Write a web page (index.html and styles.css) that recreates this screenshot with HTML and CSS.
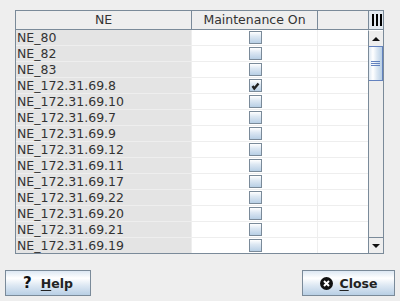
FILE: index.html
```html
<!DOCTYPE html>
<html>
<head>
<meta charset="utf-8">
<link rel="stylesheet" href="styles.css">
</head>
<body>
<div class="pane">
  <div class="table">
    <div class="thead">
      <div class="th c1">NE</div>
      <div class="th c2">Maintenance On</div>
      <div class="th c3"></div>
    </div>
    <div class="tbody">
      <div class="tr"><div class="td c1">NE_80</div><div class="td c2"><span class="cb"></span></div><div class="td c3"></div></div>
      <div class="tr"><div class="td c1">NE_82</div><div class="td c2"><span class="cb"></span></div><div class="td c3"></div></div>
      <div class="tr"><div class="td c1">NE_83</div><div class="td c2"><span class="cb"></span></div><div class="td c3"></div></div>
      <div class="tr"><div class="td c1">NE_172.31.69.8</div><div class="td c2"><span class="cb"><svg width="11" height="11" viewBox="0 0 11 11"><path d="M2.5 6 L4.3 8.5 L8.5 3.5" fill="none" stroke="#222" stroke-width="2.4"/></svg></span></div><div class="td c3"></div></div>
      <div class="tr"><div class="td c1">NE_172.31.69.10</div><div class="td c2"><span class="cb"></span></div><div class="td c3"></div></div>
      <div class="tr"><div class="td c1">NE_172.31.69.7</div><div class="td c2"><span class="cb"></span></div><div class="td c3"></div></div>
      <div class="tr"><div class="td c1">NE_172.31.69.9</div><div class="td c2"><span class="cb"></span></div><div class="td c3"></div></div>
      <div class="tr"><div class="td c1">NE_172.31.69.12</div><div class="td c2"><span class="cb"></span></div><div class="td c3"></div></div>
      <div class="tr"><div class="td c1">NE_172.31.69.11</div><div class="td c2"><span class="cb"></span></div><div class="td c3"></div></div>
      <div class="tr"><div class="td c1">NE_172.31.69.17</div><div class="td c2"><span class="cb"></span></div><div class="td c3"></div></div>
      <div class="tr"><div class="td c1">NE_172.31.69.22</div><div class="td c2"><span class="cb"></span></div><div class="td c3"></div></div>
      <div class="tr"><div class="td c1">NE_172.31.69.20</div><div class="td c2"><span class="cb"></span></div><div class="td c3"></div></div>
      <div class="tr"><div class="td c1">NE_172.31.69.21</div><div class="td c2"><span class="cb"></span></div><div class="td c3"></div></div>
      <div class="tr"><div class="td c1">NE_172.31.69.19</div><div class="td c2"><span class="cb"></span></div><div class="td c3"></div></div>
    </div>
  </div>
  <div class="vscroll">
    <div class="corner"><span class="bar"></span><span class="bar"></span><span class="bar"></span></div>
    <div class="sbtn up"><span class="tri-up"></span></div>
    <div class="track">
      <div class="thumb"><span class="grip"></span><span class="grip"></span><span class="grip"></span></div>
    </div>
    <div class="sbtn down"><span class="tri-down"></span></div>
  </div>
</div>
<div class="buttons">
  <button class="btn help"><span class="qicon">?</span><span class="lbl"><u>H</u>elp</span></button>
  <button class="btn close"><svg class="xicon" width="13" height="13" viewBox="0 0 13 13"><circle cx="6.5" cy="6.5" r="6.5" fill="#111"/><path d="M4 4 L9 9 M9 4 L4 9" stroke="#fff" stroke-width="2"/></svg><span class="lbl"><u>C</u>lose</span></button>
</div>
</body>
</html>
```
FILE: styles.css
```css
html, body {
  margin: 0;
  padding: 0;
  background: #eeeeee;
  font-family: "DejaVu Sans", sans-serif;
  font-size: 12.5px;
  color: #333333;
}
.pane {
  margin: 10px 0 0 15px;
  width: 369px;
  height: 244px;
  box-sizing: border-box;
  border: 1px solid #7a8a99;
  display: flex;
  background: #ffffff;
}
.table {
  width: 352px;
  display: flex;
  flex-direction: column;
}
.thead {
  display: flex;
  height: 19px;
  box-sizing: border-box;
  border-bottom: 1px solid #7a8a99;
  background: #eeeeee;
}
.th {
  box-sizing: border-box;
  text-align: center;
  line-height: 18px;
  border-right: 1px solid #7a8a99;
}
.th.c3 { border-right: none; }
.c1 { width: 176px; }
.c2 { width: 126px; }
.c3 { width: 50px; }
.tbody {
  flex: 1;
  overflow: hidden;
}
.tr {
  display: flex;
  height: 16px;
}
.td {
  box-sizing: border-box;
  height: 16px;
  border-right: 1px solid #eeeeee;
  border-bottom: 1px solid #eeeeee;
  line-height: 15px;
  white-space: nowrap;
}
.td.c1 {
  background: #e4e4e4;
  border-color: #eeeeee;
  padding-left: 1px;
}
.td.c2 {
  display: flex;
  justify-content: center;
  align-items: center;
}
.td.c3 { border-right: none; }
.cb {
  width: 13px;
  height: 13px;
  box-sizing: border-box;
  border: 1px solid #7a8a99;
  background: linear-gradient(#ffffff 0%, #dde8f3 40%, #b8cfe5 100%);
  display: flex;
  align-items: center;
  justify-content: center;
  margin-left: 1px;
}
.vscroll {
  width: 15px;
  display: flex;
  flex-direction: column;
  background: #eeeeee;
}
.corner {
  height: 19px;
  box-sizing: border-box;
  border-left: 1px solid #7a8a99;
  border-bottom: 1px solid #7a8a99;
  background: #e2e9f0;
  display: flex;
  justify-content: center;
  align-items: center;
  gap: 2px;
  padding-left: 1px;
}
.bar {
  width: 2px;
  height: 12px;
  background: #000000;
}
.sbtn {
  height: 16px;
  box-sizing: border-box;
  border-left: 1px solid #7a8a99;
  background: #eeeeee;
  display: flex;
  align-items: center;
  justify-content: center;
  border-top: 1px solid #ffffff;
}
.sbtn.down {
  border-top: 1px solid #7a8a99;
}
.tri-up {
  width: 0; height: 0;
  border-left: 4px solid transparent;
  border-right: 4px solid transparent;
  border-bottom: 4px solid #111;
}
.tri-down {
  width: 0; height: 0;
  border-left: 4px solid transparent;
  border-right: 4px solid transparent;
  border-top: 4px solid #111;
}
.track {
  flex: 1;
  border-left: 1px solid #7a8a99;
  background: #eeeeee;
}
.thumb {
  height: 35px;
  box-sizing: border-box;
  border: 1px solid #6382bf;
  border-left: none;
  background: linear-gradient(to right, #dde8f3 0%, #ffffff 30%, #dde8f3 60%, #b8cfe5 100%);
  display: flex;
  flex-direction: column;
  align-items: center;
  justify-content: center;
  gap: 1px;
}
.grip {
  width: 9px;
  height: 1px;
  background: #6382bf;
}
.buttons {
  display: flex;
  justify-content: space-between;
  margin-top: 16px;
  padding: 0 5px;
}
.btn {
  height: 26px;
  box-sizing: border-box;
  border: 1px solid #7a8a99;
  border-radius: 0;
  background: linear-gradient(#dde8f3 0%, #ffffff 30%, #dde8f3 60%, #b8cfe5 100%);
  font-family: "DejaVu Sans", sans-serif;
  font-weight: bold;
  font-size: 12.5px;
  color: #222222;
  display: flex;
  align-items: center;
  justify-content: center;
  padding: 0;
  margin: 0;
}
.help { width: 86px; }
.close { width: 93px; }
.qicon {
  font-size: 15px;
  margin-right: 9px;
  color: #111;
}
.xicon { margin-right: 7px; }
.lbl u { text-decoration-thickness: 1px; text-underline-offset: 2px; }
```
